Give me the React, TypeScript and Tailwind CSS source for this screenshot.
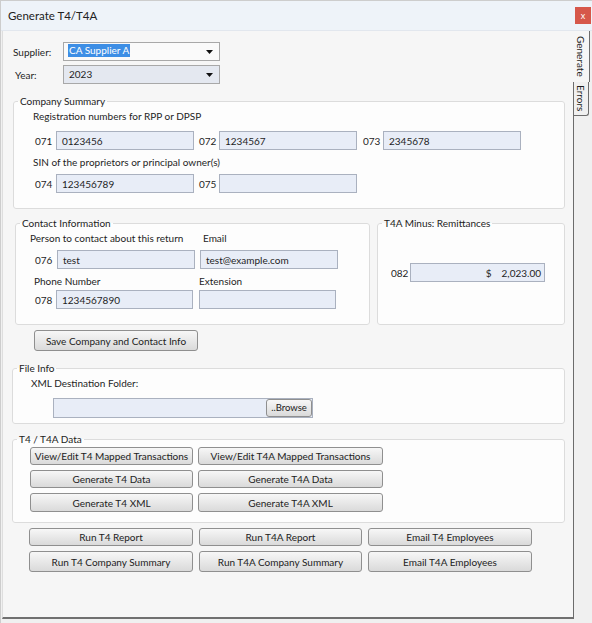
import React from "react";

type P = { className?: string; children?: React.ReactNode };

const Field = ({ className = "", children }: P) => (
  <div className={`h-[19px] bg-[#e8edf7] border border-[#aab1bf] flex items-center px-[5px] text-[#1e1e1e] whitespace-nowrap ${className}`}>
    {children}
  </div>
);

const Btn = ({ className = "", children }: P) => (
  <button className={`flex items-center justify-center rounded-[3px] border border-[#8f8f8f] bg-linear-to-b from-[#f7f7f7] to-[#dadada] text-[#222] leading-none whitespace-nowrap ${className}`}>
    {children}
  </button>
);

const Group = ({ title, className = "", children }: P & { title: string }) => (
  <fieldset className={`border border-[#dcdcdc] rounded-[3px] bg-[#fdfdfd] ${className}`}>
    <legend className="ml-[4px] px-[2px] leading-[14px] text-[#222]">{title}</legend>
    {children}
  </fieldset>
);

const Arrow = () => (
  <svg width="7" height="4" viewBox="0 0 7 4" className="shrink-0">
    <path d="M0 0H7L3.5 4Z" fill="#111" />
  </svg>
);

export default function App() {
  return (
    <div className="w-[592px] h-[623px] overflow-hidden bg-[#f0f0f0] border-l border-t border-[#cdcdcd] font-['Lato',sans-serif] text-[10px] leading-[14px] text-[#1e1e1e] flex flex-col">
      {/* title bar */}
      <div className="h-[30px] shrink-0 bg-[#eef3f9] border-b border-[#e2e7ee] flex items-center justify-between pl-[7px] pr-[1px]">
        <span className="text-[11.5px] text-[#222]">Generate T4/T4A</span>
        <div className="w-[16px] h-[17px] bg-[#d6574a] text-white text-[9px] leading-none flex items-center justify-center">x</div>
      </div>

      <div className="flex flex-row items-start h-[592px]">
        {/* main panel */}
        <div className="w-[571px] ml-[1px] h-[588px] bg-[#f6f6f6] border-l border-[#dedede] border-b-2 border-b-[#707070] flex flex-col pl-[10px] pr-[8px] pt-[11px]">
          {/* supplier / year */}
          <div className="flex items-center h-[19px]">
            <span className="w-[50px]">Supplier:</span>
            <div className="w-[157px] h-[19px] bg-[#fafafa] border border-[#a8a8a8] flex items-center justify-between pl-[4px] pr-[6px]">
              <span className="bg-[#3d8ee5] text-white px-[1px] leading-[13px] -mt-[2px]">CA Supplier A</span>
              <Arrow />
            </div>
          </div>
          <div className="flex items-center h-[19px] mt-[4px]">
            <span className="w-[48px] ml-[2px]">Year:</span>
            <div className="w-[157px] h-[19px] bg-[#e4e8f0] border border-[#a8a8a8] flex items-center justify-between pl-[5px] pr-[6px]">
              <span className="-mt-[2px]">2023</span>
              <Arrow />
            </div>
          </div>

          {/* company summary */}
          <Group title="Company Summary" className="mt-[10px]">
            <div className="pl-[19px] pt-[1px] pb-[15px]">
              <div>Registration numbers for RPP or DPSP</div>
              <div className="flex items-center mt-[8px] ml-[2px]">
                <span className="w-[21px]">071</span>
                <Field className="w-[138px]">0123456</Field>
                <span className="w-[20px] ml-[5px]">072</span>
                <Field className="w-[138px]">1234567</Field>
                <span className="w-[20px] ml-[6px]">073</span>
                <Field className="w-[138px]">2345678</Field>
              </div>
              <div className="mt-[5px]">SIN of the proprietors or principal owner(s)</div>
              <div className="flex items-center mt-[5px] ml-[2px]">
                <span className="w-[21px]">074</span>
                <Field className="w-[138px]">123456789</Field>
                <span className="w-[20px] ml-[5px]">075</span>
                <Field className="w-[138px]"></Field>
              </div>
            </div>
          </Group>

          {/* contact + remittances */}
          <div className="flex flex-row items-stretch mt-[7px]">
            <Group title="Contact Information" className="ml-[2px] w-[355px]">
              <div className="pl-[14px] pt-[1px] pb-[15px]">
                <div className="flex">
                  <span className="w-[173px]">Person to contact about this return</span>
                  <span>Email</span>
                </div>
                <div className="flex items-center mt-[5px] ml-[5px]">
                  <span className="w-[22px]">076</span>
                  <Field className="w-[138px]">test</Field>
                  <Field className="w-[138px] ml-[5px]">test@example.com</Field>
                </div>
                <div className="flex mt-[5px] ml-[4px]">
                  <span className="w-[165px]">Phone Number</span>
                  <span>Extension</span>
                </div>
                <div className="flex items-center mt-[2px] ml-[5px]">
                  <span className="w-[21px]">078</span>
                  <Field className="w-[137px]">1234567890</Field>
                  <Field className="w-[137px] ml-[6px]"></Field>
                </div>
              </div>
            </Group>
            <Group title="T4A Minus: Remittances" className="ml-[7px] flex-1">
              <div className="flex items-center pl-[13px] pt-[33px]">
                <span className="w-[19px]">082</span>
                <Field className="w-[135px] justify-end pr-[3px]">
                  <span>$</span>
                  <span className="ml-[10px]">2,023.00</span>
                </Field>
              </div>
            </Group>
          </div>

          <Btn className="w-[164px] h-[21px] mt-[5px] ml-[21px]">Save Company and Contact Info</Btn>

          {/* file info */}
          <Group title="File Info" className="mt-[10px] -ml-[1px]">
            <div className="pl-[18px] pt-[1px] pb-[5px]">
              <div>XML Destination Folder:</div>
              <div className="mt-[8px] ml-[22px] w-[260px] h-[20px] bg-[#e8edf7] border border-[#aab1bf] flex items-center justify-end">
                <Btn className="w-[46px] h-[18px] rounded-[2px] text-[9.5px]">..Browse</Btn>
              </div>
            </div>
          </Group>

          {/* T4 data */}
          <Group title="T4 / T4A Data" className="mt-[8px] -ml-[1px]">
            <div className="pl-[17px] pt-[1px] pb-[10px] grid grid-cols-[163px_185px] grid-rows-[18px_18px_19px] gap-x-[5px] gap-y-[5px]">
              <Btn>View/Edit T4 Mapped Transactions</Btn>
              <Btn>View/Edit T4A Mapped Transactions</Btn>
              <Btn>Generate T4 Data</Btn>
              <Btn>Generate T4A Data</Btn>
              <Btn>Generate T4 XML</Btn>
              <Btn>Generate T4A XML</Btn>
            </div>
          </Group>

          {/* reports */}
          <div className="mt-[5px] ml-[16px] grid grid-cols-[164px_163px_164px] grid-rows-[18px_21px] gap-x-[6px] gap-y-[5px]">
            <Btn>Run T4 Report</Btn>
            <Btn>Run T4A Report</Btn>
            <Btn>Email T4 Employees</Btn>
            <Btn>Run T4 Company Summary</Btn>
            <Btn>Run T4A Company Summary</Btn>
            <Btn>Email T4A Employees</Btn>
          </div>
        </div>

        {/* side tabs */}
        <div className="w-[19px] h-[588px] flex flex-col">
          <div className="w-[17px] h-[51px] bg-[#f6f6f6] border-r border-[#6c6c6c] flex items-center justify-center">
            <span className="[writing-mode:vertical-rl] leading-none text-[10px]">Generate</span>
          </div>
          <div className="w-[16px] h-[34px] bg-[#f0f0f0] border border-t-0 border-[#6c6c6c] rounded-br-[3px] flex items-center justify-center">
            <span className="[writing-mode:vertical-rl] leading-none text-[10px]">Errors</span>
          </div>
          <div className="flex-1 border-l border-[#6c6c6c]"></div>
        </div>
      </div>
    </div>
  );
}
